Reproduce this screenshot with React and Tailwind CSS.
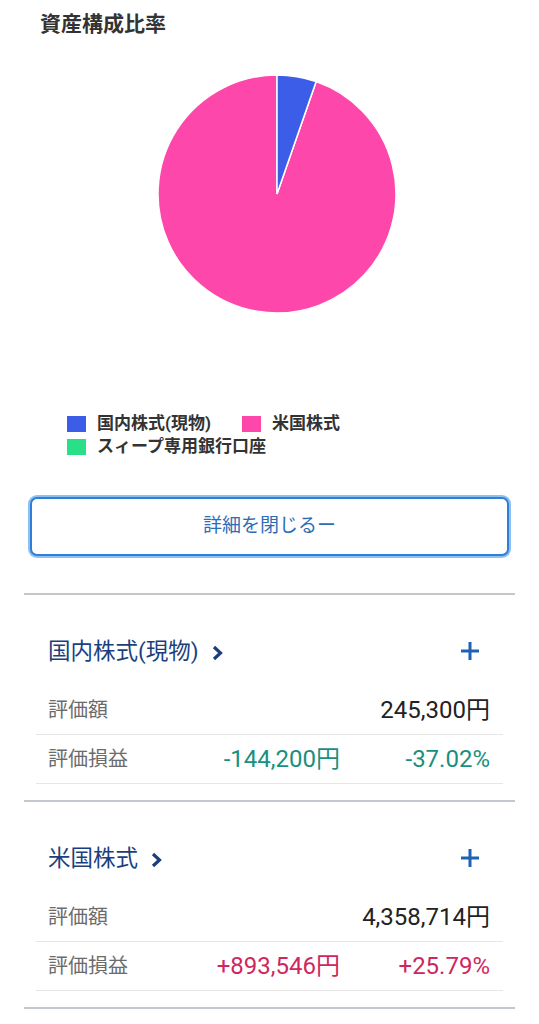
import React from 'react';

const font = { fontFamily: 'Roboto, "Noto Sans CJK JP", sans-serif' };

const legend = [
  [
    { color: 'bg-[#3b5de7]', label: '国内株式(現物)' },
    { color: 'bg-[#fe47ab]', label: '米国株式' },
  ],
  [{ color: 'bg-[#29e089]', label: 'スィープ専用銀行口座' }],
];

const sections = [
  {
    name: '国内株式(現物)',
    value: '245,300円',
    gain: '-144,200円',
    rate: '-37.02%',
    up: false,
  },
  {
    name: '米国株式',
    value: '4,358,714円',
    gain: '+893,546円',
    rate: '+25.79%',
    up: true,
  },
];

const Pie = () => {
  // 245,300 / 4,604,014 -> about 19.2 degrees
  const r = 119;
  const a = (19.2 * Math.PI) / 180;
  const x = 120 + r * Math.sin(a);
  const y = 120 - r * Math.cos(a);
  return (
    <svg width="240" height="240" viewBox="0 0 240 240">
      <path
        d={`M120 120 L${x} ${y} A${r} ${r} 0 1 1 120 1 Z`}
        fill="#fe47ab"
        stroke="#fff"
        strokeWidth="1.5"
      />
      <path
        d={`M120 120 L120 1 A${r} ${r} 0 0 1 ${x} ${y} Z`}
        fill="#3b5de7"
        stroke="#fff"
        strokeWidth="1.5"
      />
    </svg>
  );
};

const Section = ({ s }) => (
  <div className="mx-[36px]">
    <div className="flex items-center justify-between pl-[12px] pr-[23px] pt-[42px] pb-[21px]">
      <div className="flex items-center gap-[13px] h-[28px] text-[22.5px] leading-[28px] text-[#1b3f7e]">
        <span>{s.name}</span>
        <svg width="11" height="16" viewBox="0 0 11 16" className="mt-[3px]">
          <path d="M2 2 L8.5 8 L2 14" fill="none" stroke="#1b3f7e" strokeWidth="3.2" />
        </svg>
      </div>
      <svg width="20" height="20" viewBox="0 0 20 20">
        <path d="M10 1 V19 M1 10 H19" stroke="#1e62b5" strokeWidth="3" />
      </svg>
    </div>
    <div className="flex items-center h-[49px] border-b border-[#e6e6e6] pl-[12px] pr-[13px]">
      <span className="flex-1 text-[20px] text-[#6b6b6b]">評価額</span>
      <span className="text-[24px] text-[#222]">{s.value}</span>
    </div>
    <div className="flex items-center h-[49px] border-b border-[#e6e6e6] pl-[12px] pr-[13px]">
      <span className="flex-1 text-[20px] text-[#6b6b6b]">評価損益</span>
      <span className={`text-[24px] ${s.up ? 'text-[#d0265f]' : 'text-[#1a8f7f]'}`}>{s.gain}</span>
      <span
        className={`w-[150px] text-right text-[24px] ${s.up ? 'text-[#d0265f]' : 'text-[#1a8f7f]'}`}
      >
        {s.rate}
      </span>
    </div>
    <div className="h-[16px]" />
  </div>
);

export default function App() {
  return (
    <div className="w-[539px] min-h-[1024px] bg-white" style={font}>
      <div className="pt-[10px] pl-[40px] text-[21px] leading-[28px] font-bold text-[#333]">
        資産構成比率
      </div>

      <div className="mt-[36px] ml-[157px]">
        <Pie />
      </div>

      <div className="mt-[98px] pl-[67px] flex flex-col">
        {legend.map((row, i) => (
          <div key={i} className="flex items-center gap-[31px] h-[23px]">
            {row.map((item) => (
              <div key={item.label} className="flex items-center gap-[11px]">
                <span className={`w-[19px] h-[16px] ${item.color}`} />
                <span className="text-[17px] font-bold text-[#333]">{item.label}</span>
              </div>
            ))}
          </div>
        ))}
      </div>

      <div className="mt-[39px] mx-[30px]">
        <button className="w-full h-[59px] rounded-[7px] border-2 border-[#2f7fd6] ring-2 ring-[#8fc0f2] bg-white text-[19px] text-[#2d6db5]">
          詳細を閉じるー
        </button>
      </div>

      <div className="mt-[37px] mx-[24px] h-[2px] bg-[#c6c6c6]" />

      {sections.map((s) => (
        <React.Fragment key={s.name}>
          <Section s={s} />
          <div className="mx-[24px] h-[2px] bg-[#c3c7ce]" />
        </React.Fragment>
      ))}
    </div>
  );
}
